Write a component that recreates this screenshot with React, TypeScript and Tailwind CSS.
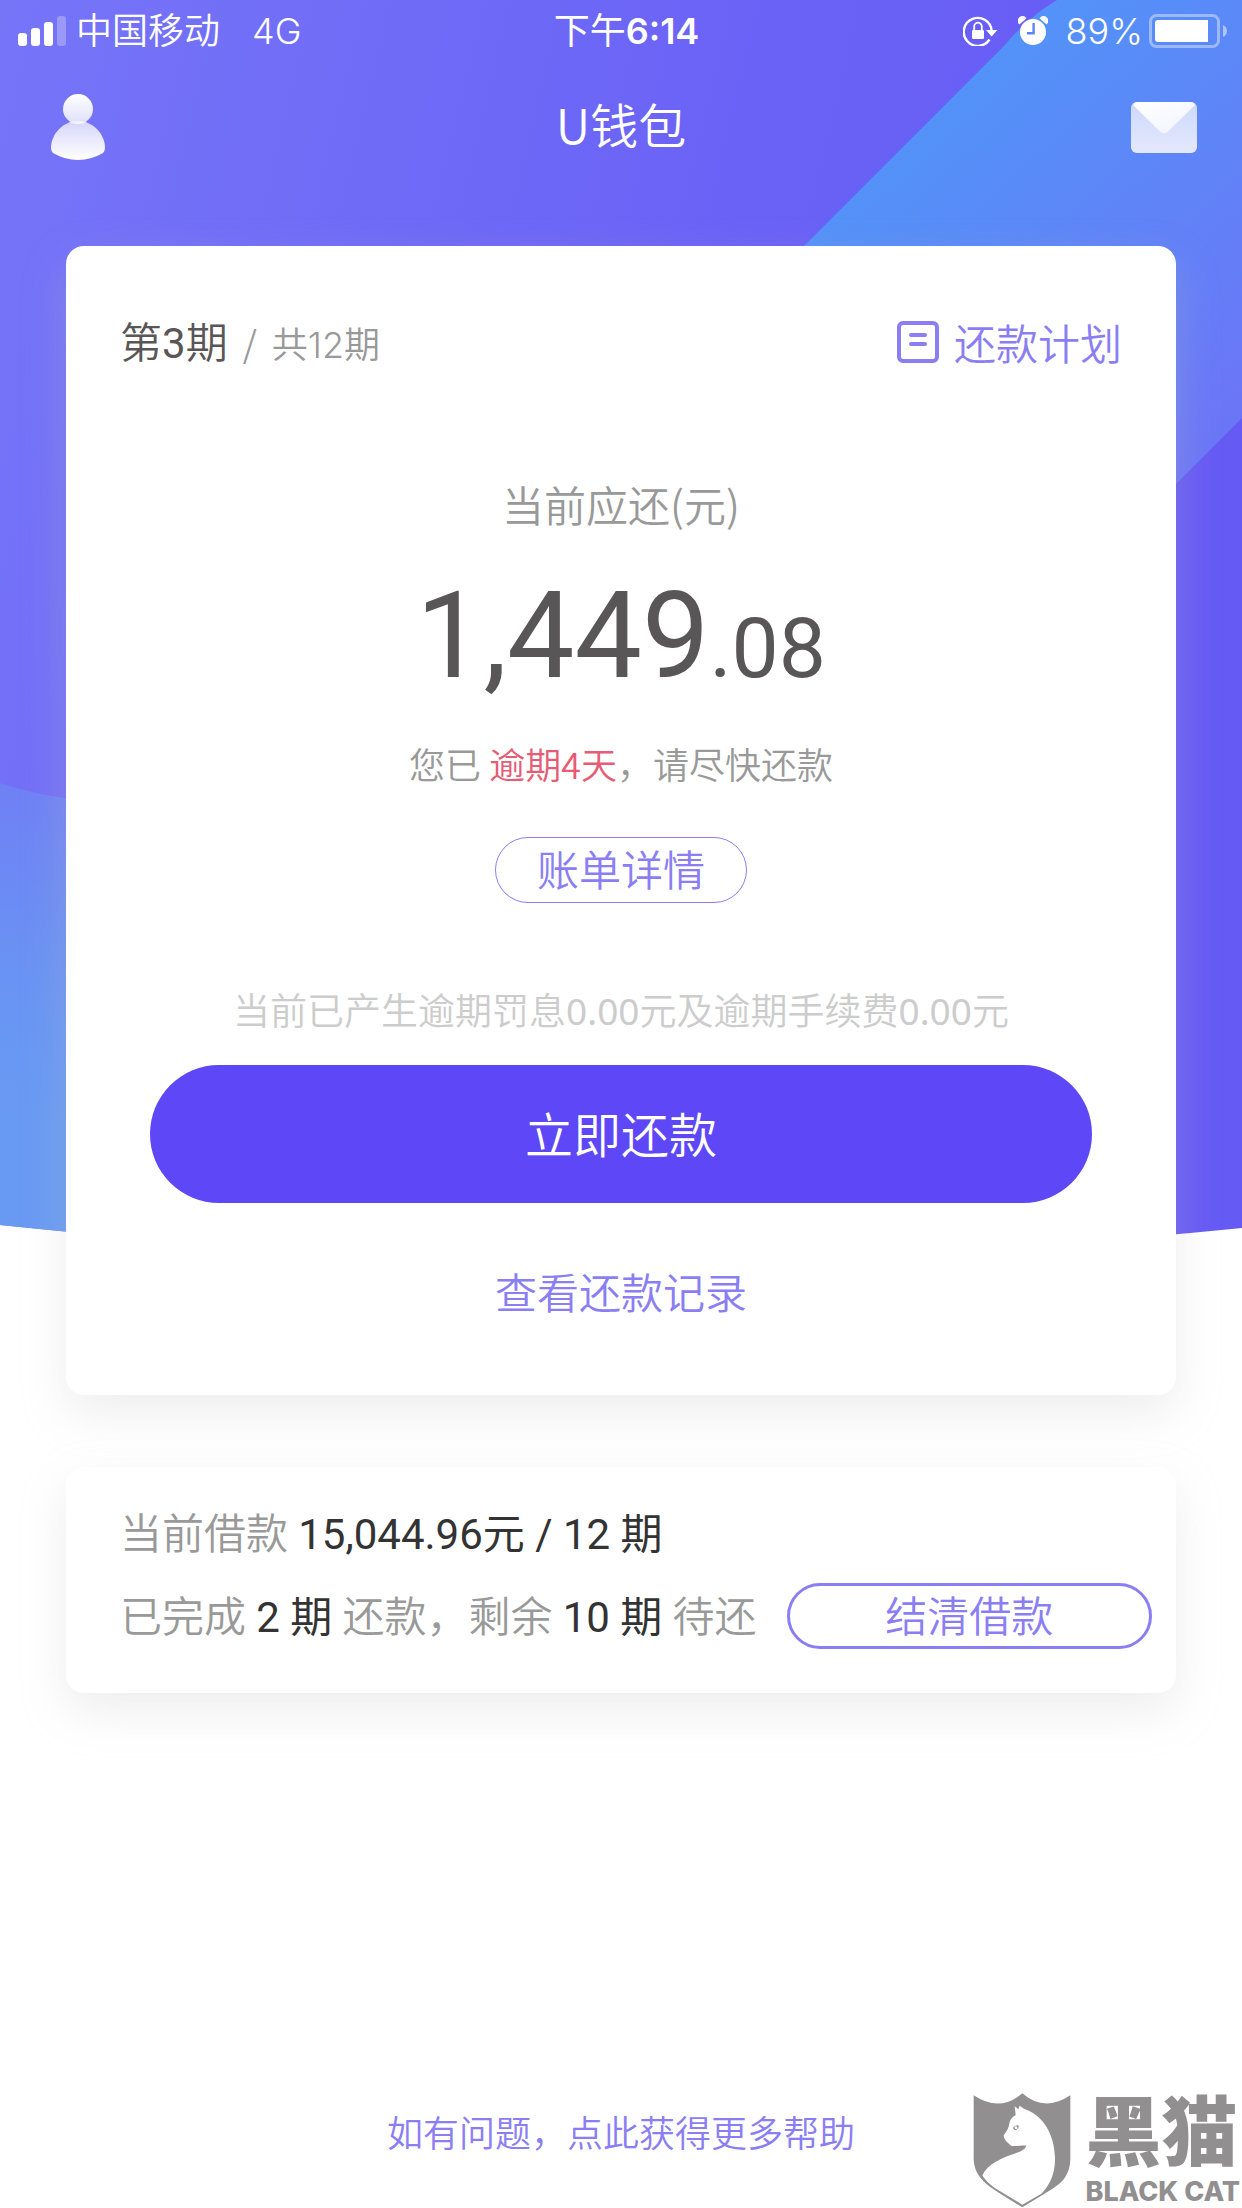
import React from "react";

const CJK = "font-['Noto_Sans_CJK_SC',sans-serif]";
const STATUS = "font-['Inter','Noto_Sans_CJK_SC',sans-serif]";
const NUMERIC = "font-['Roboto','Noto_Sans_CJK_SC',sans-serif]";

function Backdrop() {
  return (
    <svg
      aria-hidden="true"
      className="absolute inset-x-0 top-0 h-[1260px] w-full"
      viewBox="0 0 1242 1260"
      preserveAspectRatio="none"
    >
      <defs>
        <linearGradient id="base" x1="0" y1="0" x2="1242" y2="300" gradientUnits="userSpaceOnUse">
          <stop offset="0" stopColor="#7675f8" />
          <stop offset="0.6" stopColor="#6a62f6" />
          <stop offset="1" stopColor="#665af5" />
        </linearGradient>
        <linearGradient id="ray" x1="930" y1="120" x2="1210" y2="430" gradientUnits="userSpaceOnUse">
          <stop offset="0" stopColor="#5392f8" />
          <stop offset="1" stopColor="#6b76f7" />
        </linearGradient>
        <linearGradient id="wave" x1="0" y1="780" x2="0" y2="1120" gradientUnits="userSpaceOnUse">
          <stop offset="0" stopColor="#6f80f5" />
          <stop offset="0.6" stopColor="#6994f4" />
          <stop offset="1" stopColor="#699af3" />
        </linearGradient>
        <clipPath id="hero">
          <path d="M0 0H1242V1228Q621 1291 0 1225Z" />
        </clipPath>
      </defs>
      <g clipPath="url(#hero)">
        <rect width="1242" height="1260" fill="url(#base)" />
        <path d="M1057 0Q1028 17 1003 47L620 430V1040L1242 418V0Z" fill="url(#ray)" />
        <path d="M0 783Q40 797 100 802Q300 820 500 1260H0Z" fill="url(#wave)" />
      </g>
    </svg>
  );
}

function StatusBar() {
  return (
    <div className={`${STATUS} grid h-[62px] grid-cols-[1fr_auto_1fr] items-center pr-[15px] pl-[18px] text-[36px] leading-[62px] text-white`}>
      <div className="flex items-center">
        <svg aria-label="信号" className="mr-[10px] h-[30px] w-[48px]" viewBox="0 0 48 30" fill="#fff">
          <rect y="17" width="9" height="13" rx="3" />
          <rect x="13" y="12" width="9" height="18" rx="3" />
          <rect x="26" y="6" width="9" height="24" rx="3" />
          <rect x="39" width="9" height="30" rx="3" opacity="0.27" />
        </svg>
        <span className="font-[350]">中国移动</span>
        <span className="ml-[32px] font-[350]">4G</span>
      </div>
      <div className="pl-[8px] font-normal">
        下午<span className="font-semibold">6:14</span>
      </div>
      <div className="flex items-center justify-end">
        <svg aria-label="方向锁定" className="mr-[19px] h-[30px] w-[36px]" viewBox="0 0 36 30" fill="none" stroke="#fff">
          <path d="M26.5 23.5A14 14 0 1 1 28.7 15" strokeWidth="2.4" />
          <path d="M23 14H34.4L28.6 20.4Z" fill="#fff" stroke="none" />
          <rect x="9" y="14" width="12" height="9" rx="1.2" fill="#fff" stroke="none" />
          <path d="M11.2 14V10.5a3.8 3.8 0 0 1 7.600 0V14" strokeWidth="1.8" />
        </svg>
        <svg aria-label="闹钟" className="mr-[18px] h-[30px] w-[30px]" viewBox="0 0 30 30">
          <circle cx="15" cy="16" r="13" fill="#fff" />
          <path d="M1.500 7.500A4 4 0 0 1 7.500 2.200ZM28.500 7.500A4 4 0 0 0 22.500 2.200Z" fill="#fff" stroke="#fff" strokeWidth="1.500" strokeLinejoin="round" />
          <path d="M15.600 7V17.300H9" fill="none" stroke="#5a86f8" strokeWidth="2.400" />
        </svg>
        <span className="font-[350]">89%</span>
        <svg aria-label="电池" className="ml-[6px] h-[34px] w-[78px]" viewBox="0 0 78 34">
          <rect x="1.500" y="1.500" width="68" height="31" rx="6" fill="none" stroke="#fff" strokeOpacity="0.4" strokeWidth="3" />
          <path d="M9 6H59V28H9Q6 28 6 25V9Q6 6 9 6Z" fill="#fff" />
          <path d="M74 11Q78 13 78 17Q78 21 74 23Z" fill="#fff" fillOpacity="0.5" />
        </svg>
      </div>
    </div>
  );
}

function Header() {
  return (
    <header className="grid h-[130px] grid-cols-[1fr_auto_1fr] items-center px-[45px]">
      <button type="button" aria-label="我的" className="justify-self-start pl-[6px]">
        <svg className="h-[66px] w-[54px]" viewBox="0 0 54 66">
          <defs>
            <linearGradient id="head" x1="0" y1="0" x2="0" y2="1">
              <stop offset="0" stopColor="#fff" />
              <stop offset="1" stopColor="#dedefc" />
            </linearGradient>
            <linearGradient id="torso" x1="0" y1="0" x2="0" y2="1">
              <stop offset="0" stopColor="#d6d5fb" />
              <stop offset="1" stopColor="#fff" />
            </linearGradient>
          </defs>
          <path d="M27 27C42 27 54 40 54 54Q54 57 52 59Q40 66 27 66T2 59Q0 57 0 54C0 40 12 27 27 27Z" fill="url(#torso)" />
          <circle cx="27" cy="15" r="15" fill="url(#head)" />
          <path d="M18 28Q27 26 36 28Q27 32 18 28Z" fill="#f4f4fe" />
        </svg>
      </button>
      <h1 className={`${CJK} pb-[8px] text-[48px] leading-[72px] font-[350] text-white`}>U钱包</h1>
      <button type="button" aria-label="消息" className="justify-self-end">
        <svg className="h-[51px] w-[66px]" viewBox="0 0 66 51">
          <defs>
            <linearGradient id="envelope" x1="0" y1="0" x2="0" y2="1">
              <stop offset="0" stopColor="#cdd9fb" />
              <stop offset="1" stopColor="#e3e8fc" />
            </linearGradient>
            <linearGradient id="flap" x1="0" y1="0" x2="1" y2="1">
              <stop offset="0" stopColor="#fff" />
              <stop offset="1" stopColor="#f0f4fe" />
            </linearGradient>
          </defs>
          <rect width="66" height="51" rx="6" fill="url(#envelope)" />
          <path d="M2 3Q3 0 7 0H59Q63 0 64 3L37 29.500Q33 33 29 29.500Z" fill="url(#flap)" />
        </svg>
      </button>
    </header>
  );
}

function BillCard() {
  return (
    <section className="mx-[66px] mt-[54px] flex flex-col items-center rounded-[18px] bg-white px-[54px] pt-[66px] pb-[74px] font-[350] shadow-[0_18px_45px_rgba(195,195,195,0.28)]">
      <div className="flex h-[60px] w-full items-start justify-between">
        <div className="flex items-baseline leading-[60px]">
          <span className={`${NUMERIC} text-[42px] text-[#585657]`}>
            第<span className="font-normal">3</span>期
          </span>
          <span className="mx-[15px] text-[36px] text-[#999]">/</span>
          <span className={`${STATUS} text-[36px] text-[#999]`}>共12期</span>
        </div>
        <a href="#plan" className="flex items-center gap-[15px] text-[42px] leading-[60px] text-[#8b7ef3]">
          <svg aria-hidden="true" className="h-[42px] w-[42px]" viewBox="0 0 42 42" fill="none" stroke="#8b7ef3" strokeWidth="4">
            <rect x="2" y="2" width="38" height="38" rx="4" />
            <path d="M14 14H28M14 23H28" strokeLinecap="round" />
          </svg>
          还款计划
        </a>
      </div>
      <p className="mt-[102px] text-[42px] leading-[60px] text-[#999]">当前应还(元)</p>
      <p className={`${NUMERIC} mt-[42px] h-[120px] text-[120px] leading-[120px] font-normal text-[#585657]`}>
        1,449<span className="text-[84px] leading-none">.08</span>
      </p>
      <p className="mt-[40px] text-[36px] leading-[54px] text-[#999]">
        您已 <span className="text-[#e65c75]">逾期4天</span>，请尽快还款
      </p>
      <button type="button" className="mt-[47px] h-[66px] w-[252px] rounded-full border border-[#8b7ef3] pb-[4px] text-[42px] leading-[60px] text-[#8b7ef3]">
        账单详情
      </button>
      <p className="mt-[81px] font-['Noto_Sans','Noto_Sans_CJK_SC',sans-serif] text-[37px] leading-[54px] whitespace-nowrap text-[#ccc]">
        当前已产生逾期罚息<span className="font-normal">0.00</span>元及逾期手续费<span className="font-normal">0.00</span>元
      </p>
      <div className="mt-[27px] w-full px-[30px]">
        <button type="button" className="h-[138px] w-full rounded-full bg-[#5d47f7] pb-[4px] text-[48px] leading-[72px] text-white">
          立即还款
        </button>
      </div>
      <a href="#records" className="mt-[58px] text-[42px] leading-[60px] text-[#8b7ef3]">
        查看还款记录
      </a>
    </section>
  );
}

function LoanCard() {
  return (
    <section className={`${NUMERIC} mx-[66px] mt-[72px] rounded-[18px] bg-white pt-[38px] pr-[24px] pb-[44px] pl-[54px] text-[42px] leading-[60px] font-[350] text-[#999] shadow-[0_18px_45px_rgba(195,195,195,0.28)]`}>
      <p>
        当前借款 <span className="font-normal text-[#333]">15,044.96元 / 12 期</span>
      </p>
      <div className="mt-[18px] flex items-center">
        <p className="pt-[4px] whitespace-nowrap">
          已完成 <span className="font-normal text-[#333]">2 期</span> 还款，剩余{" "}
          <span className="font-normal text-[#333]">10 期</span> 待还
        </p>
        <button type="button" className="ml-[30px] h-[66px] flex-1 rounded-full border-3 border-[#8b7ef3] pt-[2px] text-[#8b7ef3]">
          结清借款
        </button>
      </div>
    </section>
  );
}

function BlackCatMark() {
  return (
    <div className="absolute right-[2px] bottom-0 flex items-end text-[#918f90]">
      <svg aria-hidden="true" className="h-[116px] w-[98px]" viewBox="38 36 294 348">
        <path d="M40 46Q118 98 186 40Q252 98 330 46V238C328 300 290 318 250 343L186 382L120 341C80 316 42 290 40 238Z" fill="#918f90" />
        <path d="M166 106L163 79L174 88L178 77L192 87C246 104 282 160 284 232C286 286 262 322 243 341L186 374L122 335C98 322 78 306 66 286C80 252 128 232 162 221C186 213 195 206 198 197C182 194 166 200 152 197C143 189 130 180 130 166C140 152 144 146 146 135C149 118 156 110 166 106Z" fill="#fff" />
        <path d="M158 143Q166 132 176 137Q175 148 165 151Q160 149 158 143Z" fill="#918f90" />
        <circle cx="167" cy="143" r="4" fill="#fff" />
      </svg>
      <div className="ml-[14px] flex flex-col">
        <span className={`${NUMERIC} text-[76px] leading-[84px] font-black`}>黑猫</span>
        <span className="font-['Inter',sans-serif] text-[27px] leading-[32px] font-extrabold whitespace-nowrap">BLACK CAT</span>
      </div>
    </div>
  );
}

export default function App() {
  return (
    <div className={`${CJK} relative flex min-h-screen flex-col overflow-hidden bg-white`}>
      <Backdrop />
      <div className="relative flex flex-1 flex-col">
        <StatusBar />
        <Header />
        <main>
          <BillCard />
          <LoanCard />
        </main>
        <footer className="mt-auto pb-[50px] text-center text-[36px] leading-[54px] font-[350]">
          <a href="#help" className="text-[#8b7ef3]">如有问题，点此获得更多帮助</a>
        </footer>
      </div>
      <BlackCatMark />
    </div>
  );
}
